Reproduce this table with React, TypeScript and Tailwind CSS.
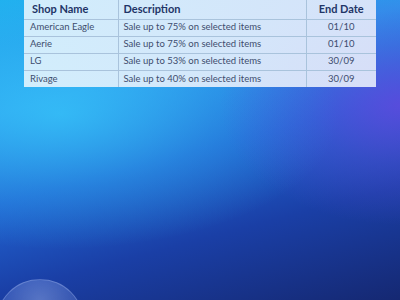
const rows = [
  { shop: "American Eagle", description: "Sale up to 75% on selected items", end: "01/10" },
  { shop: "Aerie", description: "Sale up to 75% on selected items", end: "01/10" },
  { shop: "LG", description: "Sale up to 53% on selected items", end: "30/09" },
  { shop: "Rivage", description: "Sale up to 40% on selected items", end: "30/09" },
];

export default function App() {
  return (
    <div className="relative h-[300px] w-[400px] overflow-hidden bg-[radial-gradient(ellipse_45%_40%_at_100%_35%,rgba(105,70,225,0.75)_0%,rgba(95,75,220,0.35)_50%,rgba(80,70,210,0)_100%),radial-gradient(ellipse_70%_45%_at_15%_38%,rgba(55,200,250,0.75)_0%,rgba(50,185,245,0.35)_55%,rgba(40,170,240,0)_100%),linear-gradient(165deg,#1fb0ee_0%,#2d97ec_28%,#2164d2_50%,#1a3fa6_72%,#152872_100%)] font-['Lato',sans-serif]">
      <div className="px-6">
        <table className="w-full border-collapse bg-[linear-gradient(90deg,rgba(222,242,253,0.93),rgba(226,232,250,0.93))] text-[9.5px] text-[#3e4d6e]">
          <thead>
            <tr className="h-[19px] text-[11px] font-bold text-[#1f3567]">
              <th className="w-[94px] border-b border-r border-[#a9c3dc] pl-[8px] text-left">Shop Name</th>
              <th className="border-b border-r border-[#a9c3dc] pl-[5px] text-left">Description</th>
              <th className="w-[70px] border-b border-[#a9c3dc] text-center">End Date</th>
            </tr>
          </thead>
          <tbody>
            {rows.map((r, i) => (
              <tr key={r.shop} className="h-[17px]">
                <td className={`border-r border-[#a9c3dc] pl-[6px] ${i < rows.length - 1 ? "border-b" : ""}`}>{r.shop}</td>
                <td className={`border-r border-[#a9c3dc] pl-[5px] ${i < rows.length - 1 ? "border-b" : ""}`}>{r.description}</td>
                <td className={`border-[#a9c3dc] text-center ${i < rows.length - 1 ? "border-b" : ""}`}>{r.end}</td>
              </tr>
            ))}
          </tbody>
        </table>
      </div>
      <div className="absolute left-[-4px] top-[279px] h-[88px] w-[88px] rounded-full border border-[rgba(170,190,240,0.35)] bg-[radial-gradient(circle_at_50%_25%,rgba(150,175,235,0.5),rgba(100,130,215,0.3)_55%,rgba(60,90,190,0.15))]" />
    </div>
  );
}
